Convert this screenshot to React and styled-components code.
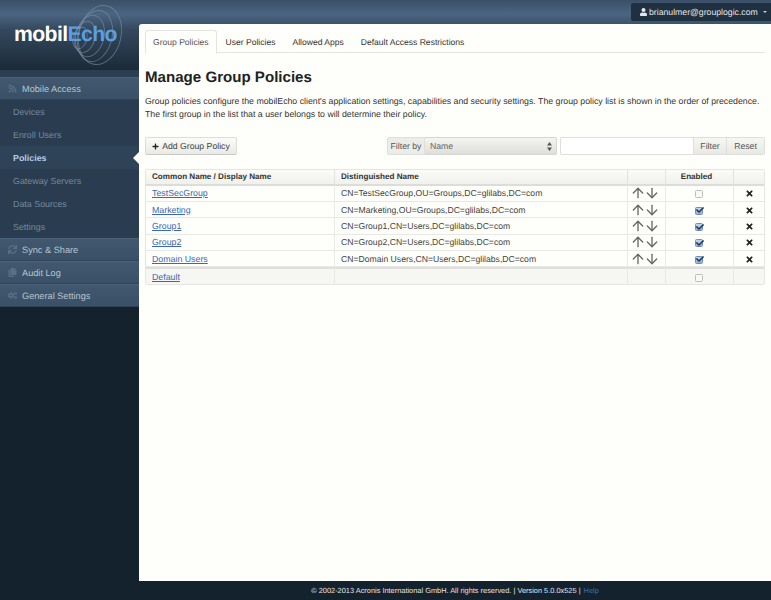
import React from "react";
import styled, { createGlobalStyle } from "styled-components";
import { FaPlus, FaUser, FaTimes, FaRss, FaSync, FaCopy, FaCogs, FaCheck } from "react-icons/fa";
import { ArrowUp, ArrowDown } from "lucide-react";

const Global = createGlobalStyle`
  html, body { margin: 0; padding: 0; height: 100%; background: #14222e; }
  body { font-family: "Liberation Sans", Arial, sans-serif; font-size: 8.8px; color: #333; text-rendering: geometricPrecision; }
  * { box-sizing: border-box; }
`;
const Page = styled.div`
  width: 771px; height: 600px; display: flex; flex-direction: column; overflow: hidden;
  background: linear-gradient(#3b5068 0, #4b6581 14px, #34485d 30px, #1b2a38 70px) 0 0 / 100% 70px no-repeat, #14222e;
`;
const Shell = styled.div`flex: 1; display: flex; min-height: 0;`;
const Sidebar = styled.aside`width: 139px; flex: none; display: flex; flex-direction: column;`;
const LogoArea = styled.div`position: relative; height: 70px; flex: none;`;
const LogoText = styled.div`
  position: absolute; left: 14px; top: 21px; font-family: "Liberation Sans", sans-serif; font-weight: 700; font-size: 21.2px;
  letter-spacing: -0.6px; color: #fff; line-height: 28px;
  span { color: #5b9fe0; }
`;
const Rings = styled.svg`position: absolute; left: 70px; top: 0;`;
const Nav = styled.nav`border-top: 7px solid #2c3f52; display: flex; flex-direction: column;`;
const Section = styled.div`
  height: 23px; display: flex; align-items: center; gap: 5px; padding-left: 8px;
  background: linear-gradient(#41586f, #3a5067); border-bottom: 1px solid #2f4356; border-top: 1px solid #4a617a;
  color: #b9c6d2; font-size: 9.2px;
  svg { width: 9px; height: 9px; color: #5a7086; flex: none; }
`;
const Item = styled.div`
  position: relative; height: 23px; display: flex; align-items: center; padding-left: 13px;
  background: ${p => (p.$active ? "#2e4358" : "#2a3d50")};
  color: ${p => (p.$active ? "#b3cce6" : "#74899d")}; font-size: 8.9px; font-weight: ${p => (p.$active ? 700 : 400)};
`;
const Pointer = styled.i`
  position: absolute; right: 0; top: 6px; border: 6px solid transparent; border-right-color: #fefefa; border-left: 0;
`;
const Main = styled.main`flex: 1; min-width: 0; display: flex; flex-direction: column;`;
const TopBar = styled.div`height: 24px; flex: none; display: flex; justify-content: flex-end; align-items: flex-start; padding-top: 3px;`;
const UserMenu = styled.div`
  height: 18px; width: 140px; display: flex; align-items: center; gap: 2px; padding-left: 9px; white-space: nowrap;
  background: #1f3040; border-radius: 2px 0 0 2px; color: #e3e8ee; font-size: 8.7px;
  svg { width: 7px; height: 8px; flex: none; }
`;
const Caret = styled.i`border: 2.5px solid transparent; border-top-color: #c5ced6; border-bottom: 0; margin-left: 3px;`;
const Panel = styled.section`flex: 1; background: #fefefa; border-radius: 3px 0 0 0; padding: 6px 6px 0 6px; display: flex; flex-direction: column;`;
const Tabs = styled.div`display: flex; border-bottom: 1px solid #e4e4e0; height: 23px; gap: 1px;`;
const Tab = styled.div`
  height: 23px; padding: 0 8px; display: flex; align-items: center; font-size: 8.55px; color: ${p => (p.$active ? "#555" : "#333")};
  ${p => p.$active && `padding: 0 7px; border: 1px solid #e4e4e0; border-bottom-color: #fefefa; border-radius: 3px 3px 0 0; background: #fefefa; height: 24px;`}
`;
const Title = styled.h1`margin: 15px 0 0; font-size: 15.1px; line-height: 20px; font-weight: 700; color: #222;`;
const Para = styled.p`margin: 7px 0 0; font-size: 8.75px; line-height: 12.5px; color: #333; white-space: nowrap;`;
const Toolbar = styled.div`margin-top: 17px; height: 19px; display: flex; justify-content: space-between;`;
const Btn = styled.div`
  height: 18px; width: 92px; display: flex; align-items: center; justify-content: center; gap: 3px; color: #444; font-size: 8.7px;
  background: linear-gradient(#fbfbf8, #e9e9e5); border: 1px solid #dcdcd8; border-bottom-color: #c9c9c5; border-radius: 2px;
  svg { width: 7px; height: 7px; color: #222; flex: none; }
`;
const FilterGroup = styled.div`display: flex; height: 18px;`;
const Addon = styled.div`
  width: 38px; display: flex; align-items: center; justify-content: center; color: #555; font-size: 8.7px;
  background: #ececE8; border: 1px solid #dedeDA; border-radius: 2px 0 0 2px;
`;
const Select = styled.div`
  width: 132px; display: flex; align-items: center; justify-content: space-between; padding: 0 3px 0 5px; color: #666; font-size: 8.7px;
  background: linear-gradient(#f4f4f0, #dedeDA); border: 1px solid #d5d5d1; border-left: 0; border-radius: 0 2px 2px 0;
`;
const Spin = styled.svg`width: 5px; height: 9px; margin-right: 1px;`;
const Input = styled.div`width: 133px; margin-left: 3px; background: #fff; border: 1px solid #dfdfdb; border-right: 0; border-radius: 2px 0 0 2px;`;
const FilterBtn = styled.div`
  width: ${p => p.$w}px; display: flex; align-items: center; justify-content: center; color: #555; font-size: 8.7px;
  background: linear-gradient(#f6f6f2, #e8e8e4); border: 1px solid #dedeDA; border-left: ${p => (p.$first ? "1px solid #dedeDA" : 0)};
  border-radius: ${p => (p.$first ? 0 : "0 2px 2px 0")};
`;
const Table = styled.table`
  margin-top: 12.5px; width: 620px; table-layout: fixed; border-collapse: separate; border-spacing: 0; font-size: 8.64px;
  border: 1px solid #e5e5e1; border-radius: 2px;
`;
const Th = styled.th`
  height: 16px; padding: 0 ${p => (p.$center ? 12 : 6)}px 0 6px; text-align: ${p => p.$center ? "center" : "left"}; font-weight: 700; font-size: 8.1px; color: #333;
  background: linear-gradient(#fbfbf8, #f0f0ec); border-bottom: 2px solid #dcdcd8; border-right: 1px solid #e2e2de;
  &:last-child { border-right: 0; }
`;
const Td = styled.td`
  height: ${p => (p.$foot ? 17 : 16.4)}px; padding: 0 6px; color: #444; white-space: nowrap; text-align: ${p => p.$center ? "center" : "left"};
  border-right: 1px solid #e8e8e4; border-bottom: 1px solid #e8e8e4; vertical-align: middle;
  background: ${p => (p.$foot ? "#f6f6f2" : "#fefefa")};
  ${p => p.$foot && `border-top: 2px solid #dfdfdb; border-bottom: 0;`}
  &:last-child { border-right: 0; }
`;
const Link = styled.a`color: #3b68b5; text-decoration: underline; font-size: 8.8px;`;
const Arrows = styled.span`
  display: inline-flex; color: #666; vertical-align: middle; margin-left: -3px;
  svg { width: 16px; height: 16px; display: block; margin: -2px -1px; }
`;
const Check = styled.span`
  display: inline-flex; align-items: center; justify-content: center; width: 8px; height: 8px; vertical-align: middle; margin: 1px 1px 0 0;
  border: 1px solid ${p => (p.$on ? "#6f8db3" : "#bdbdb9")}; border-radius: 1.5px;
  background: ${p => (p.$on ? "linear-gradient(#c3d6ec, #8fb0d8)" : "#f8f8f6")}; overflow: visible;
  svg { width: 8px; height: 8px; color: #1c3654; margin: -1px -1px 0 0; flex: none; }
`;
const Del = styled.span`
  display: inline-flex; vertical-align: middle; color: #222;
  svg { width: 9px; height: 9px; display: block; }
`;
const Footer = styled.footer`
  height: 19px; flex: none; display: flex; align-items: center; justify-content: center; padding-left: 139px; white-space: nowrap;
  background: #14222e; color: #e3e5e8; font-size: 7.4px; width: 771px;
  a { color: #2f6fc0; margin-left: 3px; }
`;

const rows = [
  ["TestSecGroup", "CN=TestSecGroup,OU=Groups,DC=glilabs,DC=com", false],
  ["Marketing", "CN=Marketing,OU=Groups,DC=glilabs,DC=com", true],
  ["Group1", "CN=Group1,CN=Users,DC=glilabs,DC=com", true],
  ["Group2", "CN=Group2,CN=Users,DC=glilabs,DC=com", true],
  ["Domain Users", "CN=Domain Users,CN=Users,DC=glilabs,DC=com", true],
];
const ringData = [[10, 38, 7, 11], [15, 37, 10, 16], [20, 36, 14, 21], [25, 36, 17, 26], [30, 35, 21, 30]];

const Box = ({ on }) => <Check $on={on}>{on && <FaCheck />}</Check>;

export default function App() {
  return (
    <Page>
      <Global />
      <Shell>
        <Sidebar>
          <LogoArea>
            <Rings width="60" height="70" viewBox="0 0 60 70" fill="none" stroke="#8398ad" strokeOpacity="0.55" strokeWidth="1">
              {ringData.map(([cx, cy, rx, ry], i) => (
                <ellipse key={i} cx={cx} cy={cy} rx={rx} ry={ry} transform={`rotate(14 ${cx} ${cy})`} />
              ))}
            </Rings>
            <LogoText>mobil<span>Echo</span></LogoText>
          </LogoArea>
          <Nav>
            <Section><FaRss />Mobile Access</Section>
            <Item>Devices</Item>
            <Item>Enroll Users</Item>
            <Item $active>Policies<Pointer /></Item>
            <Item>Gateway Servers</Item>
            <Item>Data Sources</Item>
            <Item>Settings</Item>
            <Section><FaSync />Sync &amp; Share</Section>
            <Section><FaCopy />Audit Log</Section>
            <Section><FaCogs />General Settings</Section>
          </Nav>
        </Sidebar>
        <Main>
          <TopBar>
            <UserMenu><FaUser />brianulmer@grouplogic.com<Caret /></UserMenu>
          </TopBar>
          <Panel>
            <Tabs>
              <Tab $active>Group Policies</Tab>
              <Tab>User Policies</Tab>
              <Tab>Allowed Apps</Tab>
              <Tab>Default Access Restrictions</Tab>
            </Tabs>
            <Title>Manage Group Policies</Title>
            <Para>
              Group policies configure the mobilEcho client's application settings, capabilities and security settings. The group policy list is shown in the order of precedence.<br />
              The first group in the list that a user belongs to will determine their policy.
            </Para>
            <Toolbar>
              <Btn><FaPlus />Add Group Policy</Btn>
              <FilterGroup>
                <Addon>Filter by</Addon>
                <Select>Name
                  <Spin viewBox="0 0 5 9"><path d="M2.5 0 5 3.5H0zM2.5 9 0 5.5h5z" fill="#555" /></Spin>
                </Select>
                <Input />
                <FilterBtn $w={34} $first>Filter</FilterBtn>
                <FilterBtn $w={38}>Reset</FilterBtn>
              </FilterGroup>
            </Toolbar>
            <Table>
              <colgroup>
                <col style={{ width: 189 }} />
                <col style={{ width: 293 }} />
                <col style={{ width: 38 }} />
                <col style={{ width: 68 }} />
                <col />
              </colgroup>
              <thead>
                <tr>
                  <Th>Common Name / Display Name</Th>
                  <Th>Distinguished Name</Th>
                  <Th />
                  <Th $center>Enabled</Th>
                  <Th />
                </tr>
              </thead>
              <tbody>
                {rows.map(([name, dn, on]) => (
                  <tr key={name}>
                    <Td><Link>{name}</Link></Td>
                    <Td>{dn}</Td>
                    <Td $center><Arrows><ArrowUp strokeWidth={2} /><ArrowDown strokeWidth={2} /></Arrows></Td>
                    <Td $center><Box on={on} /></Td>
                    <Td $center><Del><FaTimes /></Del></Td>
                  </tr>
                ))}
                <tr>
                  <Td $foot><Link>Default</Link></Td>
                  <Td $foot />
                  <Td $foot />
                  <Td $foot $center><Box on={false} /></Td>
                  <Td $foot />
                </tr>
              </tbody>
            </Table>
          </Panel>
        </Main>
      </Shell>
      <Footer>© 2002-2013 Acronis International GmbH. All rights reserved. | Version 5.0.0x525 | <a>Help</a></Footer>
    </Page>
  );
}
